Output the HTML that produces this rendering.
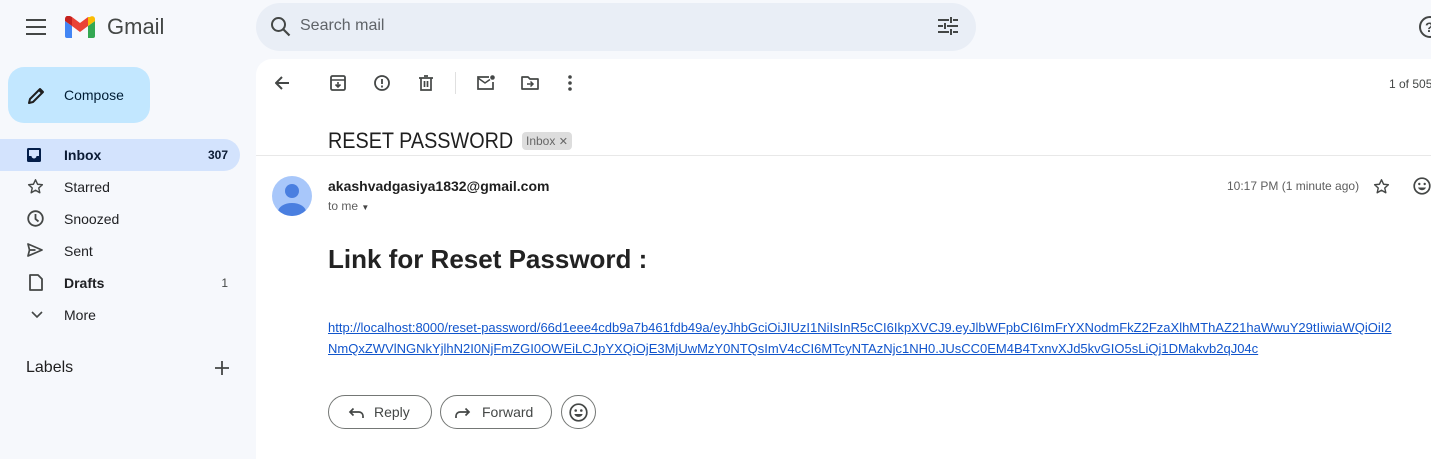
<!DOCTYPE html>
<html><head><meta charset="utf-8"><style>
*{margin:0;padding:0;box-sizing:border-box}
body{width:1431px;height:445px;overflow:hidden;background:#f6f8fc;font-family:"Liberation Sans",Arial,sans-serif;color:#1f1f1f;position:relative}
.a{position:absolute}
svg{display:block}
.nav{position:absolute;left:0;width:240px;height:32px;font-size:14px;color:#202124}
.nav .ic{position:absolute;left:27px;top:7px}
.nav .t{position:absolute;left:64px;top:8px}
.nav .c{position:absolute;right:12px;top:9px;font-size:12px}
.btn{position:absolute;top:395px;height:34px;border:1px solid #747775;border-radius:17px;font-size:14px;color:#444746}
</style></head><body>
<svg class="a" style="left:26px;top:18px" width="20" height="18"><path d="M0 2h20M0 9h20M0 16h20" stroke="#444746" stroke-width="2"/></svg>
<svg class="a" style="left:65px;top:16px" width="30" height="22" viewBox="0 0 30 22">
<path d="M0 5v15a2 2 0 0 0 2 2h5V10z" fill="#4285f4"/>
<path d="M23 22h5a2 2 0 0 0 2-2V5l-7 5z" fill="#34a853"/>
<path d="M23 1v9l7-5V3c0-2.5-3-3.5-5-2z" fill="#fbbc04"/>
<path d="M7 10V1l8 6 8-6v9l-8 6z" fill="#ea4335"/>
<path d="M0 3v2l7 5V1L5 0C3-1 0 0 0 3z" fill="#c5221f"/>
</svg>
<div class="a" style="left:107px;top:14px;font-size:22px;color:#444746">Gmail</div>
<div class="a" style="left:256px;top:3px;width:720px;height:48px;border-radius:24px;background:#e9eef6"></div>
<svg class="a" style="left:270px;top:16px" width="22" height="22"><circle cx="8.5" cy="8.5" r="6.5" fill="none" stroke="#444746" stroke-width="2"/><path d="M13.5 13.5l6 6" stroke="#444746" stroke-width="2.2"/></svg>
<div class="a" style="left:300px;top:17px;font-size:16px;color:#5f6368">Search mail</div>
<svg class="a" style="left:938px;top:17px" width="20" height="18"><path d="M0 3h11M15 3h5M0 9h5M9 9h11M0 15h11M15 15h5M13 0v6M7 6v6M13 12v6" stroke="#444746" stroke-width="2"/></svg>
<div class="a" style="left:1419px;top:16px;width:22px;height:22px;border:2px solid #444746;border-radius:50%;font-size:14px;font-weight:bold;color:#444746;padding-left:4px;line-height:18px">?</div>
<div class="a" style="left:8px;top:67px;width:142px;height:56px;border-radius:16px;background:#c2e7ff"></div>
<svg class="a" style="left:27px;top:86px" width="19" height="19"><path d="M2 17l1-4L13 3l3 3L6 16z M12 4l3 3" fill="none" stroke="#1f1f1f" stroke-width="2" stroke-linejoin="round"/></svg>
<div class="a" style="left:64px;top:87px;font-size:14px;color:#001d35">Compose</div>
<div class="nav" style="top:139px;background:#d3e3fd;border-radius:0 16px 16px 0;font-weight:bold;color:#0b1b34">
<svg class="ic" style="top:9px" width="14" height="14"><rect width="14" height="14" rx="1.5" fill="#041e49"/><path d="M2 2h10v6H9.5a2.5 2.5 0 0 1-5 0H2z" fill="#d3e3fd"/></svg>
<span class="t">Inbox</span><span class="c" style="right:12px">307</span></div>
<div class="nav" style="top:171px"><svg class="ic" width="17" height="17" viewBox="0 0 24 24"><path d="M12 2.5l2.9 6.3 6.8.7-5.1 4.6 1.5 6.7L12 17.3l-6.1 3.5 1.5-6.7-5.1-4.6 6.8-.7z" fill="none" stroke="#444746" stroke-width="2" stroke-linejoin="round"/></svg><span class="t">Starred</span></div>
<div class="nav" style="top:203px"><svg class="ic" width="17" height="17"><circle cx="8.5" cy="8.5" r="7.3" fill="none" stroke="#444746" stroke-width="1.8"/><path d="M8.5 4v5l3 2.5" fill="none" stroke="#444746" stroke-width="1.8"/></svg><span class="t">Snoozed</span></div>
<div class="nav" style="top:235px"><svg class="ic" style="top:8px" width="16" height="14"><path d="M1 1l14 6-14 6 1.5-6z M2.5 7h6" fill="none" stroke="#444746" stroke-width="1.7" stroke-linejoin="round"/></svg><span class="t">Sent</span></div>
<div class="nav" style="top:267px;font-weight:bold"><svg class="ic" style="left:29px" width="14" height="17"><path d="M1 1h8l4 4v11H1z" fill="none" stroke="#444746" stroke-width="1.8" stroke-linejoin="round"/></svg><span class="t">Drafts</span><span class="c" style="font-weight:normal;color:#444746">1</span></div>
<div class="nav" style="top:299px"><svg class="ic" style="left:31px;top:12px" width="12" height="8"><path d="M1 1l5 5 5-5" fill="none" stroke="#444746" stroke-width="1.6"/></svg><span class="t">More</span></div>
<div class="a" style="left:26px;top:359px;font-size:16px;color:#1f1f1f">Labels</div>
<svg class="a" style="left:215px;top:361px" width="14" height="14"><path d="M7 0v14M0 7h14" stroke="#444746" stroke-width="1.8"/></svg>
<div class="a" style="left:256px;top:59px;width:1200px;height:400px;background:#fff;border-radius:16px 0 0 0"></div>
<svg class="a" style="left:275px;top:76px" width="14" height="14"><path d="M14 7H2M7 1L1 7l6 6" fill="none" stroke="#444746" stroke-width="2"/></svg>
<svg class="a" style="left:330px;top:75px" width="16" height="16"><rect x="1" y="1" width="14" height="14" rx="1.5" fill="none" stroke="#444746" stroke-width="1.8"/><path d="M1 5h14M8 7v5M5.5 9.5L8 12l2.5-2.5" fill="none" stroke="#444746" stroke-width="1.6"/></svg>
<svg class="a" style="left:374px;top:75px" width="16" height="16"><circle cx="8" cy="8" r="7" fill="none" stroke="#444746" stroke-width="1.8"/><path d="M8 4v5M8 10.5v2" stroke="#444746" stroke-width="1.8"/></svg>
<svg class="a" style="left:419px;top:75px" width="14" height="16"><path d="M0 3h14M5 1h4M2 3v12h10V3M5.5 6v6M8.5 6v6" fill="none" stroke="#444746" stroke-width="1.7"/></svg>
<div class="a" style="left:455px;top:72px;width:1px;height:22px;background:#e0e0e0"></div>
<svg class="a" style="left:477px;top:75px" width="18" height="15"><path d="M12 2H1v12h15V7" fill="none" stroke="#444746" stroke-width="1.7"/><path d="M1 3l7 5 5-3.5" fill="none" stroke="#444746" stroke-width="1.5"/><circle cx="15.5" cy="2.5" r="2.3" fill="#444746"/></svg>
<svg class="a" style="left:521px;top:76px" width="18" height="14"><path d="M1 1h6l2 2h8v10H1z" fill="none" stroke="#444746" stroke-width="1.7" stroke-linejoin="round"/><path d="M6 8h6M9.5 5.5L12 8l-2.5 2.5" fill="none" stroke="#444746" stroke-width="1.5"/></svg>
<svg class="a" style="left:568px;top:75px" width="4" height="16"><circle cx="2" cy="2" r="1.8" fill="#444746"/><circle cx="2" cy="8" r="1.8" fill="#444746"/><circle cx="2" cy="14" r="1.8" fill="#444746"/></svg>
<div class="a" style="left:1389px;top:77px;font-size:12px;color:#444746;white-space:nowrap">1 of 505</div>
<div class="a" style="left:328px;top:128px;font-size:22px;color:#1f1f1f;white-space:nowrap;transform:scaleX(0.9);transform-origin:0 0">RESET PASSWORD</div>
<div class="a" style="left:522px;top:132px;height:18px;padding:0 4px;background:#ddd;border-radius:4px;font-size:12px;line-height:18px;color:#666">Inbox <span style="font-size:11px">✕</span></div>
<div class="a" style="left:256px;top:155px;width:1180px;height:1px;background:#e8e8e8"></div>
<svg class="a" style="left:272px;top:176px" width="40" height="40"><defs><clipPath id="c"><circle cx="20" cy="20" r="20"/></clipPath></defs><circle cx="20" cy="20" r="20" fill="#a8c7fa"/><g clip-path="url(#c)" fill="#4a7fe0"><circle cx="20" cy="15" r="7"/><ellipse cx="20" cy="36" rx="14" ry="9"/></g></svg>
<div class="a" style="left:328px;top:178px;font-size:14px;font-weight:bold;color:#1f1f1f">akashvadgasiya1832@gmail.com</div>
<div class="a" style="left:328px;top:199px;font-size:12px;color:#5e5e5e">to me <span style="font-size:8px;color:#444">▼</span></div>
<div class="a" style="left:1227px;top:179px;font-size:12px;color:#5e5e5e;white-space:nowrap">10:17 PM (1 minute ago)</div>
<svg class="a" style="left:1373px;top:178px" width="17" height="17" viewBox="0 0 24 24"><path d="M12 2.5l2.9 6.3 6.8.7-5.1 4.6 1.5 6.7L12 17.3l-6.1 3.5 1.5-6.7-5.1-4.6 6.8-.7z" fill="none" stroke="#444746" stroke-width="2" stroke-linejoin="round"/></svg>
<svg class="a" style="left:1413px;top:177px" width="18" height="18"><circle cx="9" cy="9" r="7.8" fill="none" stroke="#444746" stroke-width="1.7"/><circle cx="6.3" cy="7" r="1.2" fill="#444746"/><circle cx="11.7" cy="7" r="1.2" fill="#444746"/><path d="M5 10.5a4.3 4.3 0 0 0 8 0z" fill="#444746"/></svg>
<div class="a" style="left:328px;top:244px;font-size:26px;font-weight:bold;color:#222">Link for Reset Password :</div>
<div class="a" style="left:328px;top:317px;font-size:13px;line-height:21px;color:#1155cc;text-decoration:underline;white-space:nowrap">http://localhost:8000/reset-password/66d1eee4cdb9a7b461fdb49a/eyJhbGciOiJIUzI1NiIsInR5cCI6IkpXVCJ9.eyJlbWFpbCI6ImFrYXNodmFkZ2FzaXlhMThAZ21haWwuY29tIiwiaWQiOiI2<br>NmQxZWVlNGNkYjlhN2I0NjFmZGI0OWEiLCJpYXQiOjE3MjUwMzY0NTQsImV4cCI6MTcyNTAzNjc1NH0.JUsCC0EM4B4TxnvXJd5kvGIO5sLiQj1DMakvb2qJ04c</div>
<div class="btn" style="left:328px;width:104px"><svg class="a" style="left:19px;top:11px" width="16" height="12"><path d="M15 11V9a4 4 0 0 0-4-4H2M5.5 1.5L2 5l3.5 3.5" fill="none" stroke="#444746" stroke-width="1.7"/></svg><span class="a" style="left:45px;top:8px">Reply</span></div>
<div class="btn" style="left:440px;width:112px"><svg class="a" style="left:14px;top:11px" width="16" height="12"><path d="M1 11V9a4 4 0 0 1 4-4h9M10.5 1.5L14 5l-3.5 3.5" fill="none" stroke="#444746" stroke-width="1.7"/></svg><span class="a" style="left:41px;top:8px">Forward</span></div>
<div class="btn" style="left:561px;width:35px"><svg class="a" style="left:7px;top:7px" width="19" height="19"><circle cx="9.5" cy="9.5" r="8.3" fill="none" stroke="#444746" stroke-width="1.7"/><circle cx="6.7" cy="7.5" r="1.3" fill="#444746"/><circle cx="12.3" cy="7.5" r="1.3" fill="#444746"/><path d="M5.3 11a4.5 4.5 0 0 0 8.4 0z" fill="#444746"/></svg></div>
</body></html>
